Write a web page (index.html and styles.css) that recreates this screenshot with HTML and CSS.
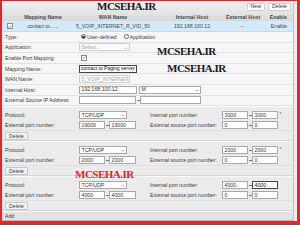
FILE: index.html
```html
<!DOCTYPE html>
<html>
<head>
<meta charset="utf-8">
<link rel="stylesheet" href="styles.css">
</head>
<body>
<div class="frame">
  <div class="panel">
    <div class="toolbar"><span class="btn">New</span><span class="btn">Delete</span></div>
    <div class="grid head"><span></span><span>Mapping Name</span><span>WAN Name</span><span>Internal Host</span><span>External Host</span><span class="en">Enable</span></div>
    <div class="grid sel">
      <span class="cbcell"><span class="cb"><svg viewBox="0 0 6 6" width="5" height="5"><path d="M1 3.2 L2.4 4.6 L5 1.4" fill="none" stroke="#555" stroke-width="0.8"/></svg></span></span>
      <span>contact to......</span><span>5_VOIP_INTERNET_R_VID_50</span><span>192.168.100.12</span><span>--</span><span class="en">Enable</span>
    </div>
    <div class="form">
      <div class="row"><span class="lbl">Type:</span><span class="radio on"></span><span class="rt">User-defined</span><span class="radio"></span><span class="rt">Application</span></div>
      <div class="row"><span class="lbl">Application:</span><span class="inp sel-dis w51">Select...<svg class="chev" viewBox="0 0 4 3" width="4" height="3"><path d="M0.5 0.7 L2 2.2 L3.5 0.7" fill="none" stroke="#aaa" stroke-width="0.6"/></svg></span></div>
      <div class="row"><span class="lbl">Enable Port Mapping:</span><span class="cb cb2"><svg viewBox="0 0 6 6" width="5" height="5"><path d="M1 3.2 L2.4 4.6 L5 1.4" fill="none" stroke="#555" stroke-width="0.8"/></svg></span></div>
      <div class="row"><span class="lbl">Mapping Name:</span><span class="inp focus w58 tight">contact to Paging server</span></div>
      <div class="row"><span class="lbl">WAN Name:</span><span class="inp sel-dis w51">5_VOIP_INTERNET_<svg class="chev" viewBox="0 0 4 3" width="4" height="3"><path d="M0.5 0.7 L2 2.2 L3.5 0.7" fill="none" stroke="#aaa" stroke-width="0.6"/></svg></span></div>
      <div class="row"><span class="lbl">Internal Host:</span><span class="inp w58">192.168.100.12</span><span class="gap2"></span><span class="inp w62">M<svg class="chev" viewBox="0 0 4 3" width="4" height="3"><path d="M0.5 0.7 L2 2.2 L3.5 0.7" fill="none" stroke="#777" stroke-width="0.6"/></svg></span></div>
      <div class="row"><span class="lbl">External Source IP Address:</span><span class="inp w57"></span><span class="dash"></span><span class="inp w61"></span></div>
    </div>

    <div class="block">
      <div class="prow"><span class="c1">Protocol:</span><span class="c2"><span class="inp w48">TCP/UDP<svg class="chev" viewBox="0 0 4 3" width="4" height="3"><path d="M0.5 0.7 L2 2.2 L3.5 0.7" fill="none" stroke="#777" stroke-width="0.6"/></svg></span></span><span class="c3">Internal port number:</span><span class="inp w26">3000</span><span class="dash"></span><span class="inp w26">3000</span><span class="req">*</span></div>
      <div class="prow tall"><span class="c1">External port number:</span><span class="c2"><span class="inp w26">19000</span><span class="dash"></span><span class="inp w27">19000</span></span><span class="c3">External source port number:</span><span class="inp w26">0</span><span class="dash"></span><span class="inp w26">0</span></div>
      <div class="prow"><span class="btn del">Delete</span></div>
    </div>

    <div class="block">
      <div class="prow"><span class="c1">Protocol:</span><span class="c2"><span class="inp w48">TCP/UDP<svg class="chev" viewBox="0 0 4 3" width="4" height="3"><path d="M0.5 0.7 L2 2.2 L3.5 0.7" fill="none" stroke="#777" stroke-width="0.6"/></svg></span></span><span class="c3">Internal port number:</span><span class="inp w26">2000</span><span class="dash"></span><span class="inp w26">2000</span><span class="req">*</span></div>
      <div class="prow tall"><span class="c1">External port number:</span><span class="c2"><span class="inp w26">2000</span><span class="dash"></span><span class="inp w27">2000</span></span><span class="c3">External source port number:</span><span class="inp w26">0</span><span class="dash"></span><span class="inp w26">0</span></div>
      <div class="prow"><span class="btn del">Delete</span></div>
    </div>

    <div class="block">
      <div class="prow"><span class="c1">Protocol:</span><span class="c2"><span class="inp w48">TCP/UDP<svg class="chev" viewBox="0 0 4 3" width="4" height="3"><path d="M0.5 0.7 L2 2.2 L3.5 0.7" fill="none" stroke="#777" stroke-width="0.6"/></svg></span></span><span class="c3">Internal port number:</span><span class="inp w26">4000</span><span class="dash"></span><span class="inp w26 focus">4000</span></div>
      <div class="prow tall"><span class="c1">External port number:</span><span class="c2"><span class="inp w26">4000</span><span class="dash"></span><span class="inp w27">4000</span></span><span class="c3">External source port number:</span><span class="inp w26">0</span><span class="dash"></span><span class="inp w26">0</span></div>
      <div class="prow"><span class="btn del">Delete</span></div>
    </div>

    <div class="addbar"><span>Add</span></div>
  </div>
</div>
<div class="wm wm1">MCSEHA.IR</div>
<div class="wm wm2">MCSEHA.IR</div>
<div class="wm wm3">MCSEHA.IR</div>
<div class="wm wm4">MCSEHA.IR</div>
</body>
</html>
```

FILE: styles.css
```css
* { box-sizing: border-box; }
html, body { margin: 0; padding: 0; }
body {
  position: relative;
  width: 300px;
  height: 225px;
  overflow: hidden;
  font-family: "Liberation Sans", Arial, sans-serif;
  font-size: 5.2px;
  color: #3c3c3c;
  background: #fff;
}
.frame {
  width: 300px;
  height: 225px;
  border-style: solid;
  border-color: #e3262e;
  border-width: 1px 3px 4px 2px;
  background: #ececec;
}
.panel {
  height: 100%;
  margin-right: 3px;
  border-right: 1px solid #c2c2c2;
  background: #f4f4f4;
  display: flex;
  flex-direction: column;
  overflow: hidden;
}
.toolbar {
  height: 12px;
  flex: none;
  display: flex;
  justify-content: flex-end;
  align-items: center;
  gap: 3px;
  padding-right: 2px;
  background: linear-gradient(#f0f0f0, #e4e4e4);
}
.btn {
  height: 8px;
  padding: 0 3px;
  display: inline-flex;
  align-items: center;
  border: 1px solid #cfcfcf;
  border-radius: 1px;
  background: #fafafa;
  color: #444;
  line-height: 1;
}
.grid {
  display: grid;
  grid-template-columns: 16px 50px 90px 68px 32px 1fr;
  align-items: center;
  text-align: center;
  flex: none;
  white-space: nowrap;
}
.grid .en { text-align: right; padding-right: 6px; }
.head {
  height: 8px;
  background: linear-gradient(#e4e4e4, #d8d8d8);
  font-weight: bold;
  font-size: 5.3px;
  color: #4a4a4a;
}
.sel {
  height: 11px;
  background: #d4eaf9;
  border-bottom: 1px solid #c3dbee;
  color: #3a4a5a;
}
.cbcell { display: flex; justify-content: center; }
.cb {
  width: 6px;
  height: 6px;
  border: 1px solid #8a8a8a;
  background: #fff;
  display: flex;
  align-items: center;
  justify-content: center;
}
.cb2 { margin-left: 2px; }
.form { flex: none; }
.row {
  height: 10.6px;
  display: flex;
  align-items: center;
  padding-left: 3px;
  border-bottom: 1px solid #e2e2e2;
  background: #f6f6f6;
  white-space: nowrap;
}
.lbl { width: 74px; flex: none; }
.radio {
  width: 5px;
  height: 5px;
  border: 0.8px solid #666;
  border-radius: 50%;
  background: #fff;
  margin: 0 1px 0 2px;
  display: inline-flex;
  align-items: center;
  justify-content: center;
  flex: none;
}
.radio.on::after {
  content: "";
  width: 2.2px;
  height: 2.2px;
  border-radius: 50%;
  background: #333;
}
.rt { margin-right: 5px; }
.inp {
  height: 8px;
  border: 1px solid #a8a8a8;
  background: #fff;
  padding-left: 1.5px;
  display: inline-flex;
  align-items: center;
  position: relative;
  flex: none;
  line-height: 1;
  color: #333;
  overflow: hidden;
  white-space: nowrap;
}
.inp.tight { padding-left: 1px; font-size: 5px; }
.inp.focus { border-color: #444; color: #111; }
.sel-dis { border-color: #d0d0d0; background: #fafafa; color: #a8a8a8; }
.chev { position: absolute; right: 1.5px; top: 2.2px; }
.w26 { width: 26px; }
.w27 { width: 27px; }
.w48 { width: 48px; }
.w51 { width: 51px; }
.w57 { width: 57px; }
.w58 { width: 58px; }
.w61 { width: 61px; }
.w62 { width: 62px; }
.gap2 { width: 2px; flex: none; }
.dash {
  width: 4px;
  flex: none;
  display: flex;
  justify-content: center;
}
.dash::before {
  content: "";
  width: 3px;
  height: 0.7px;
  background: #777;
}
.block {
  height: 35px;
  flex: none;
  padding-top: 3px;
  background: #ebebeb;
  border-bottom: 1px solid #d6d6d6;
  border-top: 1px solid #fbfbfb;
}
.prow {
  height: 10px;
  display: flex;
  align-items: center;
  padding-left: 3px;
  white-space: nowrap;
}
.prow.tall { height: 11px; border-bottom: 1px solid #e0e0e0; }
.c1 { width: 74px; flex: none; }
.c2 { width: 71px; flex: none; display: flex; align-items: center; }
.c3 { width: 72px; flex: none; }
.req { color: #e03030; margin-left: 1.5px; align-self: flex-start; margin-top: 1px; }
.del { background: #f3f3f3; border-color: #c6c6c6; }
.addbar {
  flex: 1;
  display: flex;
  align-items: center;
  padding-left: 3px;
  background: #e2e2e2;
  border-top: 1px solid #f8f8f8;
  border-bottom: 1px solid #b8b8b8;
}
.wm {
  position: absolute;
  font-family: "Liberation Serif", "Times New Roman", serif;
  font-weight: bold;
  font-size: 11px;
  line-height: 11px;
  letter-spacing: -0.5px;
  color: #1a1a1a;
  white-space: nowrap;
}
.wm1 { left: 97px; top: 1px; }
.wm2 { left: 157px; top: 46px; }
.wm3 { left: 167px; top: 63px; }
.wm4 { left: 75px; top: 169px; color: #d8262a; }
```
